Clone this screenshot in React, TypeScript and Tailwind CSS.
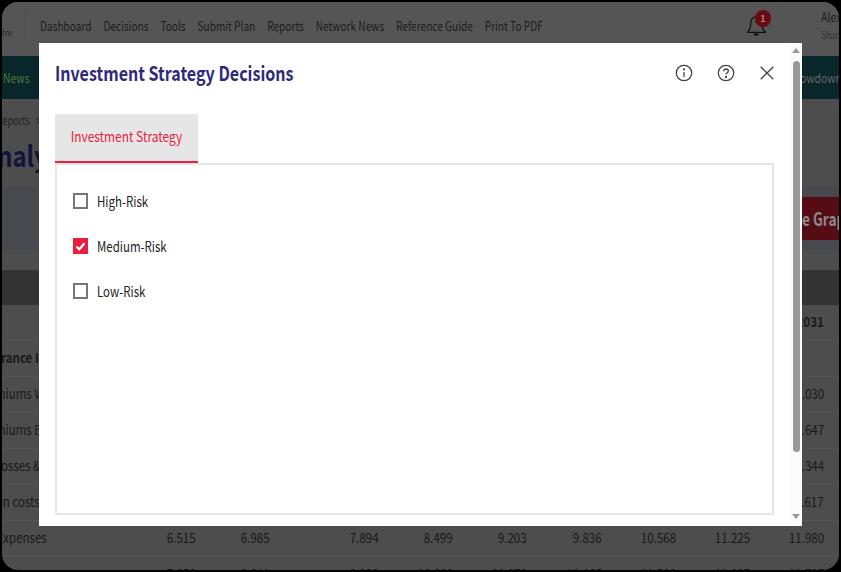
const NAV = ["Dashboard", "Decisions", "Tools", "Submit Plan", "Reports", "Network News", "Reference Guide", "Print To PDF"];

const ROWS = [
  { label: "", offset: "", values: ["", "", "", "", "", "", "", "", "2031"], bold: true },
  { label: "Insurance Income", offset: "-ml-[25px]", values: ["", "", "", "", "", "", "", "", ""], bold: true },
  { label: "Premiums Written", offset: "-ml-[25px]", values: ["", "", "", "", "", "", "", "", "13.030"] },
  { label: "Premiums Earned", offset: "-ml-[25px]", values: ["", "", "", "", "", "", "", "", "12.647"] },
  { label: "Losses & Claims", offset: "-ml-[7px]", values: ["", "", "", "", "", "", "", "", "10.344"] },
  { label: "Admin costs", offset: "-ml-[27px]", values: ["", "", "", "", "", "", "", "", "1.617"] },
  { label: "Expenses", offset: "-ml-[5px]", values: ["6.515", "6.985", "7.894", "8.499", "9.203", "9.836", "10.568", "11.225", "11.980"] },
  { label: "Net Income", offset: "-ml-[6px]", values: ["7.850", "8.341", "9.330", "10.030", "11.073", "11.105", "11.589", "11.807", "11.795"] },
];

const OPTIONS = [
  { label: "High-Risk", checked: false },
  { label: "Medium-Risk", checked: true },
  { label: "Low-Risk", checked: false },
];

function Bell() {
  return (
    <svg width="23" height="25" viewBox="0 0 20 22" fill="none" stroke="#111" strokeWidth="1.1" className="absolute left-[-4px] top-[7px]">
      <path d="M2 17c1.600-1.400 2.600-3.200 2.800-6l.2-2.400C5.300 5.500 7 3.500 9.800 3.500c2.800 0 4.600 2 4.900 5.100l.2 2.400c.2 2.800 1.300 4.600 3.100 6z" strokeLinejoin="round" />
      <path d="M8 18.500c.4 1.300 3.100 1.300 3.600 0z" fill="#111" />
    </svg>
  );
}

function InfoIcon() {
  return (
    <svg width="18" height="18" viewBox="0 0 18 18" fill="none" stroke="#444" strokeWidth="1.300">
      <circle cx="9" cy="9" r="7.700" />
      <path d="M9 8v5" />
      <circle cx="9" cy="5.400" r=".5" fill="#444" />
    </svg>
  );
}

function HelpIcon() {
  return (
    <svg width="18" height="18" viewBox="0 0 18 18" fill="none" stroke="#444" strokeWidth="1.300">
      <circle cx="9" cy="9" r="7.700" />
      <path d="M6.700 7.200c0-1.400 1-2.200 2.300-2.200s2.300.8 2.300 2c0 1.700-2.300 1.800-2.300 3.600" />
      <circle cx="9" cy="13" r=".5" fill="#444" />
    </svg>
  );
}

function CloseIcon() {
  return (
    <svg width="14" height="14" viewBox="0 0 14 14" fill="none" stroke="#444" strokeWidth="1.300">
      <path d="M.7.700l12.600 12.600M13.300.700L.7 13.300" />
    </svg>
  );
}

function Checkbox({ checked }: { checked: boolean }) {
  if (checked) {
    return (
      <div className="w-[15px] h-[16px] bg-[#ea1f3d] flex items-center justify-center">
        <svg width="11" height="9" viewBox="0 0 11 9" fill="none" stroke="#fff" strokeWidth="2.200">
          <path d="M1.500 4.500l2.800 2.800 5.200-6" />
        </svg>
      </div>
    );
  }
  return <div className="w-[15px] h-[16px] border-2 border-[#767676] bg-white" />;
}

export default function App() {
  return (
    <div className="w-[841px] h-[572px] bg-black p-[2px] font-['Noto_Sans_CJK_SC','Noto_Sans',sans-serif]">
      <div className="relative w-full h-full rounded-[16px] overflow-hidden bg-[#4d4d4d] flex flex-col">
        {/* Page behind the dialog, dimmed */}
        <header className="h-[54px] pb-[6px] shrink-0 bg-[#555555] flex items-center">
          <div className="w-[23px] h-[28px] border-r border-[#4d4d4d] flex items-end shrink-0 overflow-hidden">
            <span className="text-[8px] leading-[14px] text-[#222]">tre</span>
          </div>
          <nav className="ml-[15px] flex gap-[15.300px] text-[13px] text-[#1c1c1c] whitespace-nowrap origin-left scale-x-[.778]">
            {NAV.map((item) => (
              <span key={item}>{item}</span>
            ))}
          </nav>
          <div className="absolute left-[747px] top-[4px] w-[16px] h-[30px]">
            <Bell />
            <div className="absolute left-[6px] top-[4px] w-[16px] h-[17px] rounded-full bg-[#6a0a16] text-[9px] leading-[17px] font-bold text-center text-[#a86]">1</div>
          </div>
          <div className="absolute left-[819px] top-[6px] whitespace-nowrap origin-left scale-x-[.82]">
            <div className="text-[13px] leading-[18px] text-[#1c1c1c]">Alex</div>
            <div className="text-[11px] leading-[16px] text-[#333]">Student</div>
          </div>
        </header>
        <div className="h-[43px] shrink-0 bg-[#09262a] flex items-center justify-between pl-[1px] text-[13px] whitespace-nowrap">
          <span className="origin-left scale-x-[.8] text-[#4b7a3c]">News</span>
          <span className="origin-right scale-x-[.8] -mr-[3px] text-[#666]">Slowdown</span>
        </div>
        <div className="h-[42px] shrink-0 pt-[12px] text-[12px] text-[#222] whitespace-nowrap -ml-[5px] origin-left scale-x-[.75]">Reports &nbsp;&nbsp;&gt;</div>
        <h1 className="h-[46px] shrink-0 text-[28px] leading-[28px] font-bold text-[#14123a] whitespace-nowrap -ml-[20px] origin-left scale-x-[.85]">Analysis</h1>
        <div className="h-[63px] shrink-0 bg-[#48484f] flex justify-end items-center">
          <div className="h-[43px] w-[37px] bg-[#570b14] text-[#8a8a8a] text-[18px] leading-[43px] font-bold whitespace-nowrap overflow-hidden">
            <span className="inline-block origin-left scale-x-[.76]">e Graph</span>
          </div>
        </div>
        <div className="h-[20px] shrink-0" />
        <div className="h-[35px] shrink-0 bg-[#333333]" />
        {ROWS.map((row) => (
          <div
            key={row.label || "head"}
            className={`h-[36px] pb-[2px] shrink-0 border-b border-[#555555] grid grid-cols-[194px_74px_109px_74px_74px_75px_74px_74px_74px] items-center text-[13.500px] text-[#191919] whitespace-nowrap ${row.bold ? "font-bold" : ""}`}
          >
            {row.values.map((v, i) => (
              <div key={i} className="flex items-center justify-between">
                <span className={`origin-left scale-x-[.85] ${row.offset}`}>{i === 0 ? row.label : ""}</span>
                <span className="inline-block origin-right scale-x-[.86]">{v}</span>
              </div>
            ))}
          </div>
        ))}

        {/* Dialog */}
        <div className="absolute left-[37px] top-[41px] w-[763px] h-[483px] bg-white flex">
          <div className="flex-1 min-w-0 pl-[16px] pr-[16px] flex flex-col">
            <div className="h-[71px] pb-[12px] shrink-0 flex items-center justify-between">
              <h2 className="text-[20px] font-bold text-[#2e2a78] whitespace-nowrap origin-left scale-x-[.8]">Investment Strategy Decisions</h2>
              <div className="flex items-center">
                <InfoIcon />
                <div className="ml-[24px]"><HelpIcon /></div>
                <div className="ml-[25px]"><CloseIcon /></div>
              </div>
            </div>
            <div className="w-[143px] h-[49px] shrink-0 bg-[#e6e6e6] border-b-2 border-[#e8213f] text-[14px] leading-[45px] text-center text-[#e8213f] whitespace-nowrap">
              <span className="inline-block scale-x-[.85]">Investment Strategy</span>
            </div>
            <div className="h-[352px] shrink-0 border-2 border-[#e6e6e6] pt-[28px] pl-[16px] flex flex-col gap-[29px]">
              {OPTIONS.map((o) => (
                <label key={o.label} className="flex items-center gap-[9px] h-[16px] text-[14px] text-[#222]">
                  <Checkbox checked={o.checked} />
                  <span className="origin-left scale-x-[.82]">{o.label}</span>
                </label>
              ))}
            </div>
          </div>
          {/* Scrollbar */}
          <div className="w-[12px] shrink-0 bg-[#fbfbfb] flex flex-col items-center pt-[5px] pb-[7px]">
            <div className="w-0 h-0 border-x-[4px] border-x-transparent border-b-[5px] border-b-[#999999]" />
            <div className="w-[7px] h-[391px] mt-[8px] rounded-full bg-[#999999]" />
            <div className="flex-1" />
            <div className="w-0 h-0 border-x-[4px] border-x-transparent border-t-[5px] border-t-[#999999]" />
          </div>
        </div>
      </div>
    </div>
  );
}
